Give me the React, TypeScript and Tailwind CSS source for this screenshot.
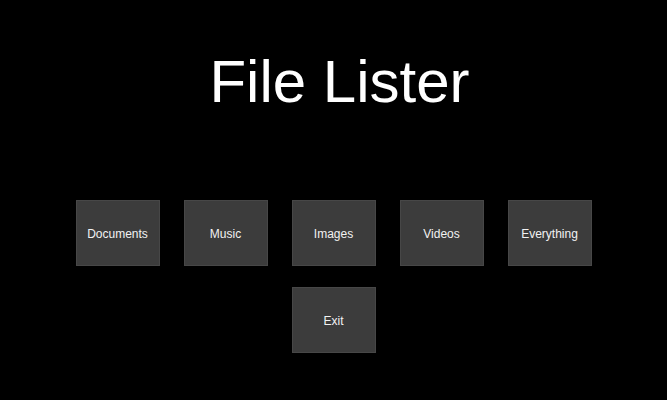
const ROW_ONE = ["Documents", "Music", "Images", "Videos", "Everything"];

function MenuButton({ label }: { label: string }) {
  return (
    <button
      type="button"
      className="flex h-[66px] w-[84px] items-center justify-center border border-[#474747] bg-[#3c3c3c] pt-[2px] text-[12px] text-[#f2f2f2]"
    >
      {label}
    </button>
  );
}

export default function App() {
  return (
    <div
      className="flex h-[400px] w-full flex-col items-center bg-black"
      style={{ fontFamily: '"Liberation Sans", Arial, sans-serif' }}
    >
      <h1 className="pl-[12px] pt-[52px] text-[60px] leading-none text-white">File Lister</h1>
      <div className="mt-[88px] flex gap-[24px]">
        {ROW_ONE.map((label) => (
          <MenuButton key={label} label={label} />
        ))}
      </div>
      <div className="mt-[21px] flex">
        <MenuButton label="Exit" />
      </div>
    </div>
  );
}
